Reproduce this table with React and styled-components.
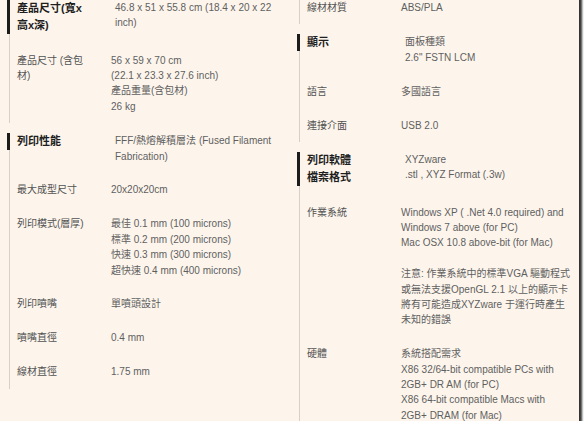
import React from "react";
import styled, { createGlobalStyle } from "styled-components";

const Global = createGlobalStyle`
  html, body { margin: 0; padding: 0; background: #ffffff; }
  body { font-family: "Liberation Sans", "Noto Sans CJK TC", sans-serif; }
`;

const Frame = styled.div`
  width: 579px;
  height: 427px;
  margin-top: -6px;
  padding-top: 6px;
  box-sizing: border-box;
  background: #fdf5ec;
  box-shadow: 3px 3px 2px rgba(0, 0, 0, 0.8);
  overflow: hidden;
  display: grid;
  grid-template-columns: 290px 289px;
`;

const Column = styled.div`
  display: flex;
  flex-direction: column;
  gap: 10px;
  padding-left: 9px;
`;

const Section = styled.section`
  border-left: 1px solid #d6d0c9;
  padding-bottom: 9px;
  display: flex;
  flex-direction: column;
  gap: 18.5px;
`;

const Row = styled.div`
  display: flex;
  align-items: flex-start;
`;

const Label = styled.div`
  box-sizing: border-box;
  flex: none;
  width: ${(p) => (p.$heading ? "82px" : "79px")};
  margin-left: ${(p) => (p.$heading ? "-3px" : "0")};
  border-left: ${(p) => (p.$heading ? "3px solid #1c1c1c" : "none")};
  padding-left: 7px;
  white-space: nowrap;
  font-size: ${(p) => (p.$heading ? "11px" : "10px")};
  font-weight: ${(p) => (p.$heading ? 700 : 400)};
  line-height: ${(p) => (p.$heading ? "17px" : "15.4px")};
  color: ${(p) => (p.$heading ? "#1e1e1e" : "#525252")};
`;

const Value = styled.div`
  flex: 1;
  margin-left: ${(p) => (p.$heading ? "26px" : "22px")};
  white-space: nowrap;
  font-size: 10px;
  line-height: 15.4px;
  color: #5f5f5f;
`;

const Line = styled.div`
  min-height: 15.4px;
`;

const left = [
  [
    {
      heading: true,
      label: ["產品尺寸(寬x", "高x深)"],
      value: ["46.8 x 51 x 55.8 cm (18.4 x 20 x 22", "inch)"],
    },
    {
      label: ["產品尺寸 (含包", "材)"],
      value: ["56 x 59 x 70 cm", "(22.1 x 23.3 x 27.6 inch)", "產品重量(含包材)", "26 kg"],
    },
  ],
  [
    {
      heading: true,
      label: ["列印性能"],
      value: ["FFF/熱熔解積層法 (Fused Filament", "Fabrication)"],
    },
    { label: ["最大成型尺寸"], value: ["20x20x20cm"] },
    {
      label: ["列印模式(層厚)"],
      value: [
        "最佳 0.1 mm (100 microns)",
        "標準 0.2 mm (200 microns)",
        "快速 0.3 mm (300 microns)",
        "超快速 0.4 mm (400 microns)",
      ],
    },
    { label: ["列印噴嘴"], value: ["單噴頭設計"] },
    { label: ["噴嘴直徑"], value: ["0.4 mm"] },
    { label: ["線材直徑"], value: ["1.75 mm"] },
  ],
];

const right = [
  [{ label: ["線材材質"], value: ["ABS/PLA"] }],
  [
    { heading: true, label: ["顯示"], value: ["面板種類", "2.6\" FSTN LCM"] },
    { label: ["語言"], value: ["多國語言"] },
    { label: ["連接介面"], value: ["USB 2.0"] },
  ],
  [
    {
      heading: true,
      label: ["列印軟體", "檔案格式"],
      value: ["XYZware", ".stl , XYZ Format (.3w)"],
    },
    {
      label: ["作業系統"],
      value: [
        "Windows XP ( .Net 4.0 required) and",
        "Windows 7 above (for PC)",
        "Mac OSX 10.8 above-bit (for Mac)",
        "",
        "注意: 作業系統中的標準VGA 驅動程式",
        "或無法支援OpenGL 2.1 以上的顯示卡",
        "將有可能造成XYZware 于運行時產生",
        "未知的錯誤",
      ],
    },
    {
      label: ["硬體"],
      value: [
        "系統搭配需求",
        "X86 32/64-bit compatible PCs with",
        "2GB+ DR AM (for PC)",
        "X86 64-bit compatible Macs with",
        "2GB+ DRAM (for Mac)",
      ],
    },
  ],
];

function SpecColumn({ sections }) {
  return (
    <Column>
      {sections.map((rows, i) => (
        <Section key={i}>
          {rows.map((r, j) => (
            <Row key={j}>
              <Label $heading={r.heading}>
                {r.label.map((l, k) => (
                  <div key={k}>{l}</div>
                ))}
              </Label>
              <Value $heading={r.heading}>
                {r.value.map((v, k) => (
                  <Line key={k}>{v}</Line>
                ))}
              </Value>
            </Row>
          ))}
        </Section>
      ))}
    </Column>
  );
}

export default function App() {
  return (
    <>
      <Global />
      <Frame>
        <SpecColumn sections={left} />
        <SpecColumn sections={right} />
      </Frame>
    </>
  );
}
